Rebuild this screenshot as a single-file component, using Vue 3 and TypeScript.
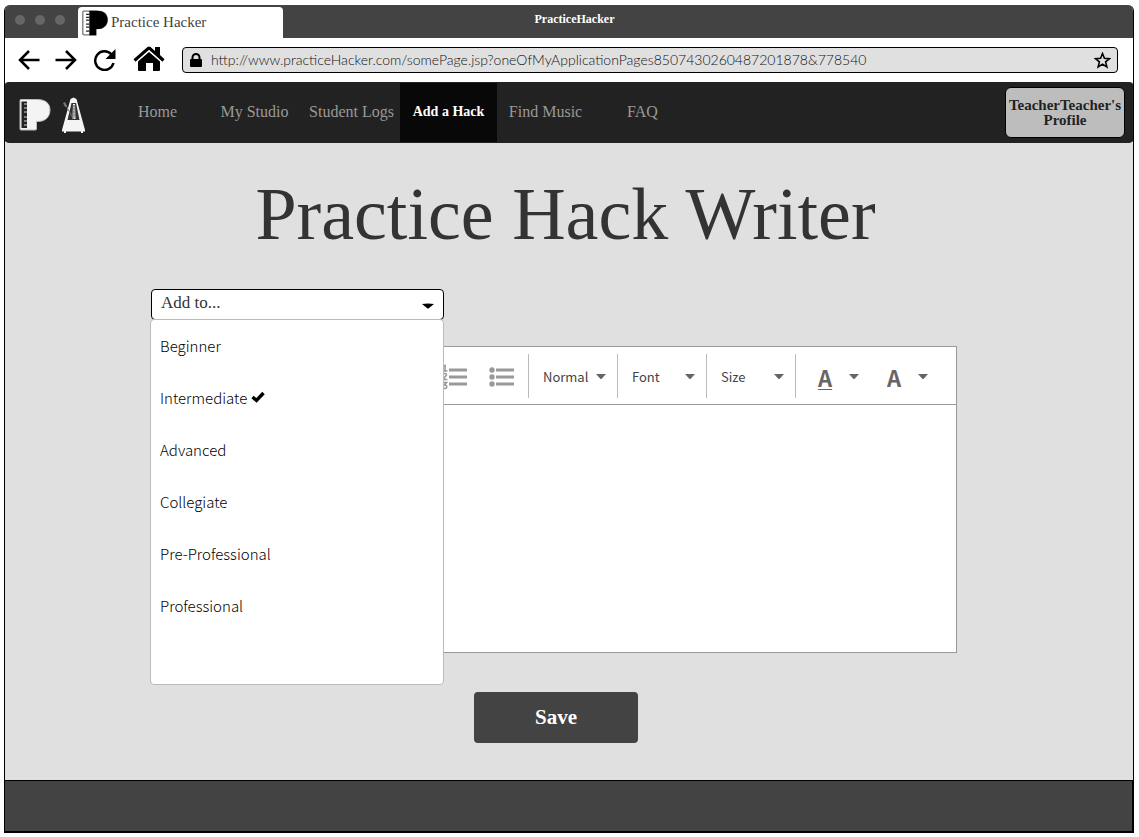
<script setup lang="ts">
import { ref } from 'vue'

interface NavItem {
  label: string
  active?: boolean
}

const navItems: NavItem[] = [
  { label: 'Home' },
  { label: 'My Studio' },
  { label: 'Student Logs' },
  { label: 'Add a Hack', active: true },
  { label: 'Find Music' },
  { label: 'FAQ' },
]

const levels: string[] = [
  'Beginner',
  'Intermediate',
  'Advanced',
  'Collegiate',
  'Pre-Professional',
  'Professional',
]

const formats: string[] = ['Normal', 'Font', 'Size']

const address = ref('http://www.practiceHacker.com/somePage.jsp?oneOfMyApplicationPages8507430260487201878&778540')
const selectedLevel = ref('Intermediate')
const menuOpen = ref(true)
const body = ref('')
</script>

<template>
  <div class="window">
    <div class="titlebar">
      <div class="dots"><i></i><i></i><i></i></div>
      <div class="tab">
        <svg class="tab-logo" viewBox="0 0 32 32" aria-hidden="true">
          <path d="M2 1.500H18C26 1.500 31 5 31 12C31 19 26 23 19 23H17V30.500H2Q1 30.500 1 29.500V2.500Q1 1.500 2 1.500Z" fill="#fff" stroke="#777" stroke-width="1.600" />
          <path d="M9 1H18C26 1 31.500 5 31.500 12C31.500 19 26 23.500 19 23.500H17.500V31H9Z" fill="#000" />
          <path d="M5 5.500H9M5 9H9M5 12.500H9M5 17.500H9M5 21H9M5 26H9" stroke="#222" stroke-width="1.500" />
        </svg>
        <span>Practice Hacker</span>
      </div>
      <div class="window-title">PracticeHacker</div>
    </div>

    <div class="browserbar">
      <button class="icon-btn" type="button" aria-label="Back">
        <svg width="22" height="20" viewBox="0 0 22 20"><path d="M11 1 2 10l9 9M2 10h19.500" fill="none" stroke="#000" stroke-width="2.500" /></svg>
      </button>
      <button class="icon-btn" type="button" aria-label="Forward">
        <svg width="22" height="20" viewBox="0 0 22 20"><path d="m11 1 9 9-9 9M20 10H.5" fill="none" stroke="#000" stroke-width="2.500" /></svg>
      </button>
      <button class="icon-btn" type="button" aria-label="Reload">
        <svg width="24" height="22" viewBox="0 0 24 22"><path d="M19.500 5.500A9.300 9.300 0 1 0 21.500 14" fill="none" stroke="#000" stroke-width="2.500" /><path d="M23.500 0v10H13.500Z" /></svg>
      </button>
      <button class="icon-btn home" type="button" aria-label="Home page">
        <svg width="32" height="26" viewBox="0 0 32 26"><path d="M22 1h5v8l4.500 4.300-2 2.400L16 3.800 2.500 15.700l-2-2.400L14.500 1Q16 0 17.500 1L22 5Z" /><path d="M16 6 27 15.500V24q0 1-1 1h-6v-8h-7v8H6q-1 0-1-1v-8.500Z" /></svg>
      </button>
      <div class="address">
        <svg width="14" height="15" viewBox="0 0 14 15" aria-hidden="true"><rect x="1" y="6" width="12" height="8" rx="1" /><path d="M3.500 7V4.500a3.500 3.500 0 0 1 7 0V7" fill="none" stroke="#000" stroke-width="2" /></svg>
        <input v-model="address" type="text" aria-label="Address" spellcheck="false">
        <button class="icon-btn" type="button" aria-label="Bookmark">
          <svg width="17" height="17" viewBox="0 0 17 17"><path d="m8.500 1.500 1.900 4.800 5.100.3-3.900 3.300 1.300 5.100-4.400-2.800L4.100 15l1.300-5.100L1.500 6.600l5.100-.3Z" fill="none" stroke="#000" stroke-width="1.600" /></svg>
        </button>
      </div>
    </div>

    <header class="site-nav">
      <a class="brand" href="#" aria-label="Practice Hacker home">
        <svg width="32" height="34" viewBox="0 0 32 34">
          <path d="M2 1.500H18C26 1.500 31 5 31 12C31 19 26 23.500 19 23.500H17.500V31Q17.500 32 16 32H2Q1 32 1 31V2.500Q1 1.500 2 1.500Z" fill="#f4f4f4" stroke="#bbb" />
          <path d="M2.500 3.500H8V30H2.500Z" fill="#222" />
          <path d="M5 6H8M5 10H8M5 14H8M5 19H8M5 23H8M5 27H8" stroke="#999" stroke-width="1.500" />
        </svg>
        <svg width="25" height="36" viewBox="0 0 25 36">
          <path d="M9.500 2 12.500.5 15.500 2 24 33v1.500h-2V36h-2v-1.500H5V36H3v-1.500H1V33Z" fill="#f4f4f4" />
          <path d="M10.500 6h4.500l3.500 17h-12Z" fill="#333" />
          <path d="m12 7-.5 15h3L14 7Z" fill="#f4f4f4" />
          <path d="m12.500 22-9-16M13 8v13M12 9h2m-2 3h2m-2 3h2m-2 3h2" fill="none" stroke="#777" stroke-width="1" />
          <path d="m2 6 2-1 2 4-2 1Z" fill="#777" />
        </svg>
      </a>
      <nav>
        <a v-for="item in navItems" :key="item.label" href="#" :class="{ active: item.active }">{{ item.label }}</a>
      </nav>
      <button class="profile" type="button">TeacherTeacher's Profile</button>
    </header>

    <main>
      <h1>Practice Hack Writer</h1>
      <form @submit.prevent>
        <div class="picker">
          <button
            class="picker-toggle"
            type="button"
            aria-haspopup="listbox"
            :aria-expanded="menuOpen"
            @click="menuOpen = !menuOpen"
          >
            <span>Add to...</span>
            <svg width="12" height="6" viewBox="0 0 12 6"><path d="M0 1Q6 0 12 1L6.500 5.500H5.500Z" /></svg>
          </button>
          <ul v-if="menuOpen" class="menu" role="listbox" aria-label="Level">
            <li
              v-for="level in levels"
              :key="level"
              role="option"
              :aria-selected="level === selectedLevel"
              @click="selectedLevel = level"
            >
              <span>{{ level }}</span>
              <svg v-if="level === selectedLevel" width="14" height="12" viewBox="0 0 14 12"><path d="m1.500 6 4 3.500L12.500 2" fill="none" stroke="#000" stroke-width="3.400" /></svg>
            </li>
          </ul>
        </div>

        <div class="editor">
          <div class="tools">
            <div class="lists">
              <button class="icon-btn" type="button" aria-label="Numbered list">
                <svg width="26" height="26" viewBox="0 0 26 26"><path d="M8 6h18M8 13h18M8 20h18" stroke="#999" stroke-width="3" /><path d="M1.500 2.500 4 1.500v5M1.500 7h5M1.500 10q4-1.500 4 1L2 15.500h4.500M1.500 18.500h4L3.500 21q3 0 2 3-1 1-4 0" fill="none" stroke="#999" stroke-width="1.600" /></svg>
              </button>
              <button class="icon-btn" type="button" aria-label="Bulleted list">
                <svg width="26" height="26" viewBox="0 0 26 26"><path d="M7 6h18M7 13h18M7 20h18" stroke="#999" stroke-width="3" /><g fill="#999"><circle cx="3" cy="6" r="2.700" /><circle cx="3" cy="13" r="2.700" /><circle cx="3" cy="20" r="2.700" /></g></svg>
              </button>
            </div>
            <label v-for="format in formats" :key="format" class="format">
              <select :aria-label="format"><option>{{ format }}</option></select>
              <svg class="caret" viewBox="0 0 10 6"><path d="M0 0h10L5.500 5h-1Z" /></svg>
            </label>
            <div class="colors">
              <button type="button" aria-label="Underline color"><span class="underlined">A</span><svg class="caret" viewBox="0 0 10 6"><path d="M0 0h10L5.500 5h-1Z" /></svg></button>
              <button type="button" aria-label="Text color"><span>A</span><svg class="caret" viewBox="0 0 10 6"><path d="M0 0h10L5.500 5h-1Z" /></svg></button>
            </div>
          </div>
          <textarea v-model="body" aria-label="Hack text"></textarea>
        </div>

        <div class="actions"><button class="save" type="submit">Save</button></div>
      </form>
    </main>
    <footer></footer>
  </div>
</template>

<style>
body {
  margin: 0;
  background: #fff;
}
</style>

<style scoped>
* {
  box-sizing: border-box;
}
button,
select,
input,
textarea {
  margin: 0;
  padding: 0;
  border: 0;
  background: none;
  font: inherit;
  color: inherit;
}
svg {
  display: block;
  flex: none;
}
.window {
  display: flex;
  flex-direction: column;
  min-height: calc(100vh - 10px);
  margin: 5px 5px 5px 4px;
  overflow: hidden;
  border: 1px solid #000;
  border-top: 0;
  border-radius: 6px 6px 0 0;
  background: #e0e0e0;
  font-family: "Liberation Serif", serif;
}
.titlebar {
  position: relative;
  display: flex;
  align-items: flex-end;
  height: 33px;
  background: #434343;
}
.dots {
  display: flex;
  gap: 10px;
  align-self: center;
  width: 73px;
  padding: 0 0 3px 10px;
}
.dots i {
  width: 10px;
  height: 10px;
  border-radius: 50%;
  background: #666;
}
.tab {
  display: flex;
  align-items: center;
  gap: 3px;
  width: 205px;
  height: 31px;
  padding-left: 4px;
  border-radius: 4px 4px 0 0;
  background: #fff;
  color: #434343;
  font-size: 15px;
}
.tab-logo {
  width: 26px;
  height: 26px;
}
.window-title {
  position: absolute;
  top: 6px;
  left: 0;
  right: 0;
  padding-left: 11px;
  text-align: center;
  color: #fff;
  font-size: 12px;
  line-height: 16px;
  font-weight: bold;
  pointer-events: none;
}
.browserbar {
  display: flex;
  align-items: center;
  gap: 15px;
  height: 44px;
  padding: 0 15px 0 13px;
  background: #fff;
}
.home {
  margin: 0 2px 3px;
}
.address {
  display: flex;
  flex: 1;
  align-items: center;
  gap: 8px;
  height: 26px;
  padding: 0 6px;
  border: 1px solid #000;
  border-radius: 4px;
  background: #e0e0e0;
}
.address input {
  flex: 1;
  min-width: 0;
  color: #111;
  font-family: Lato, sans-serif;
  font-size: 14px;
  line-height: 20px;
  font-weight: 300;
  outline: 0;
}
.site-nav {
  display: flex;
  align-items: stretch;
  height: 61px;
  margin: 0 -1px;
  padding: 1px 9px 1px 15px;
  border-radius: 5px;
  background: #222;
}
.brand {
  display: flex;
  align-items: center;
  gap: 10px;
  width: 90px;
  padding-top: 4px;
}
nav {
  display: flex;
  flex: 1;
}
nav a {
  display: flex;
  align-items: center;
  justify-content: center;
  width: 97px;
  padding-bottom: 2px;
  color: #999;
  font-size: 16px;
  text-decoration: none;
}
nav a.active {
  background: #080808;
  color: #fff;
  font-size: 14px;
  font-weight: bold;
}
.profile {
  align-self: center;
  width: 120px;
  height: 51px;
  border: 1px solid #000;
  border-radius: 6px;
  background: #bdbdbd;
  color: #222;
  font-size: 15px;
  line-height: 15px;
  font-weight: bold;
}
main {
  flex: 1;
}
h1 {
  margin: 0;
  padding: 29px 7px 0 0;
  color: #333;
  font-size: 74px;
  line-height: 84px;
  font-weight: normal;
  text-align: center;
}
form {
  padding: 33px 176px 37px 146px;
}
.picker {
  position: relative;
  width: 293px;
}
.picker-toggle {
  display: flex;
  align-items: center;
  justify-content: space-between;
  width: 100%;
  height: 31px;
  padding: 0 9px;
  border: 1px solid #000;
  border-radius: 4px;
  background: #fff;
  color: #333;
  font-size: 17px;
}
.picker-toggle span {
  padding-bottom: 4px;
}
.picker-toggle svg {
  margin-top: 3px;
}
.menu {
  position: absolute;
  z-index: 1;
  top: 30px;
  left: -1px;
  width: 294px;
  height: 366px;
  margin: 0;
  padding: 0;
  border: 1px solid #bbb;
  border-radius: 4px;
  background: #fff;
  list-style: none;
  font-family: "Noto Sans CJK SC", sans-serif;
  font-size: 15px;
  font-weight: 300;
  color: #000;
}
.menu li {
  display: flex;
  align-items: center;
  gap: 4px;
  height: 52px;
  padding: 0 0 2px 9px;
}
.editor {
  margin-top: 26px;
  border: 1px solid #999;
  background: #fff;
}
.tools {
  display: flex;
  align-items: center;
  justify-content: flex-end;
  height: 58px;
  border-bottom: 1px solid #999;
  color: #444;
  font-family: "Noto Sans CJK SC", sans-serif;
  font-size: 13px;
}
.lists {
  display: flex;
  gap: 22px;
  padding: 2px 13px 0 0;
}
.format {
  display: flex;
  align-items: center;
  width: 89px;
  height: 44px;
  padding: 2px 11px 0 14px;
  border-left: 1px solid #bbb;
}
.format select {
  flex: 1;
  min-width: 0;
  appearance: none;
}
.caret {
  width: 10px;
  height: 6px;
  fill: #666;
}
.colors {
  display: flex;
  gap: 28px;
  width: 161px;
  height: 44px;
  padding: 3px 0 0 22px;
  border-left: 1px solid #bbb;
}
.colors button {
  display: flex;
  align-items: center;
  gap: 17px;
  color: #666;
  font-size: 22px;
  line-height: 22px;
  font-weight: bold;
}
.underlined {
  text-decoration: underline;
  text-decoration-thickness: 1px;
  text-underline-offset: 2px;
}
textarea {
  display: block;
  width: 100%;
  height: 247px;
  padding: 12px;
  resize: none;
  outline: 0;
}
.actions {
  padding: 39px 0 0 4px;
  text-align: center;
}
.save {
  width: 164px;
  height: 51px;
  border-radius: 4px;
  background: #434343;
  color: #fff;
  font-size: 21px;
  font-weight: bold;
}
footer {
  height: 52px;
  border: 1px solid #000;
  border-width: 1px 1px 1px 0;
  background: #434343;
}
</style>
